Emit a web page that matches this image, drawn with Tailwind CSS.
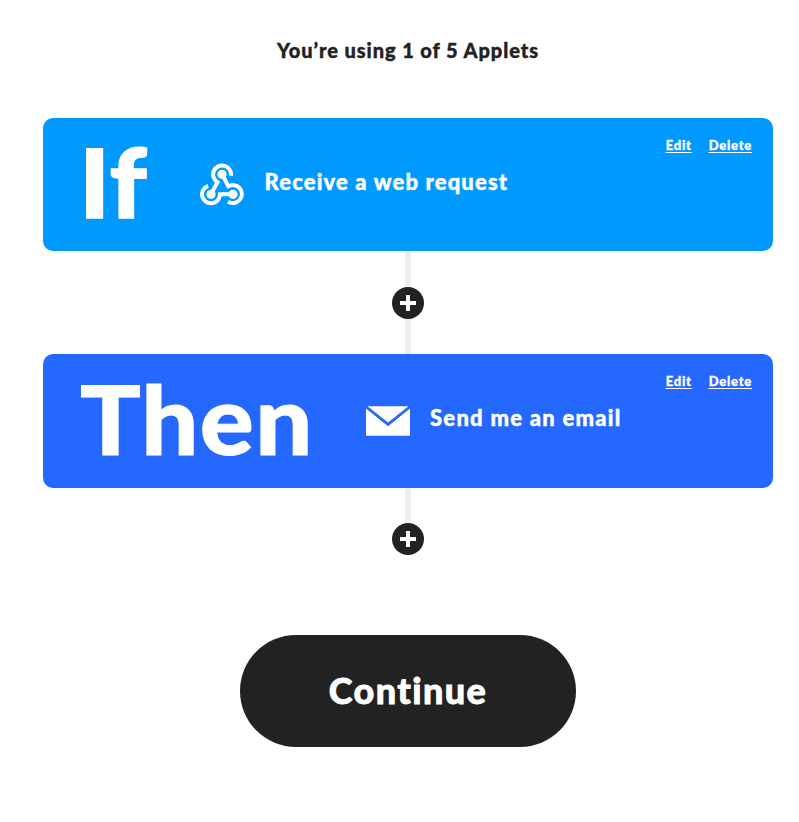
<!DOCTYPE html>
<html lang="en">
<head>
<meta charset="utf-8">
<title>Create Applet</title>
<script src="https://cdn.jsdelivr.net/npm/@tailwindcss/browser@4"></script>
</head>
<body class="bg-white font-['Lato',sans-serif] font-black text-[#222222] [font-variant-ligatures:none]">
<main class="ml-[43px] flex h-[822px] w-[730px] flex-col items-center overflow-hidden">
  <h1 class="mt-[35px] h-[83px] whitespace-nowrap text-[20px] leading-[30px] tracking-[0.93px] [-webkit-text-stroke:0.4px]">You’re using 1 of 5 Applets</h1>

  <section class="flex h-[133px] w-full shrink-0 rounded-[10px] bg-[#0099ff] text-white">
    <div class="ml-[36px] w-[121px] whitespace-nowrap pt-[3px] text-[96px] leading-[120px]"><span class="inline-block origin-left scale-x-[1.07] tracking-[1px] [-webkit-text-stroke:1.5px]">If</span></div>
    <svg class="mt-[45px] h-[44px] w-[44px] shrink-0" viewBox="0 0 44 44" fill="none" stroke="currentColor" stroke-width="4">
      <path d="M11 31L17.5 19.2A9 9 0 1 1 31 12.8"/>
      <path d="M22 11L28.3 23.3A9 9 0 1 1 28 38.6"/>
      <path d="M33 31.3H20A9 9 0 1 1 8.2 22.8"/>
      <g fill="currentColor" stroke="none"><circle cx="22" cy="11.3" r="4.6"/><circle cx="11" cy="31.3" r="4.6"/><circle cx="33" cy="31.3" r="4.6"/></g>
    </svg>
    <p class="ml-[20.5px] mt-[48px] whitespace-nowrap text-[22px] leading-[32px] tracking-[1.15px] [-webkit-text-stroke:0.4px]">Receive a web request</p>
    <nav class="ml-auto mr-[21px] mt-[17px] flex h-5 gap-[17px] text-[13px] leading-5 tracking-[0.75px] underline underline-offset-2 [-webkit-text-stroke:0.3px]"><a>Edit</a><a>Delete</a></nav>
  </section>

  <div class="flex h-[103px] shrink-0 flex-col items-center">
    <div class="h-[36px] w-[6px] bg-[#eeeeee]"></div>
    <svg class="size-8" viewBox="0 0 32 32"><circle cx="16" cy="16" r="16" fill="#222"/><path d="M8 16h16M16 8v16" stroke="#fff" stroke-width="4"/></svg>
    <div class="w-[6px] flex-1 bg-[#eeeeee]"></div>
  </div>

  <section class="flex h-[134px] w-full shrink-0 rounded-[10px] bg-[#2468ff] text-white">
    <div class="ml-[36.5px] w-[286.5px] whitespace-nowrap pt-[4px] text-[96px] leading-[120px]"><span class="inline-block origin-left scale-x-[1.05] tracking-[1.3px] [-webkit-text-stroke:1px]">Then</span></div>
    <svg class="mt-[52px] h-[30px] w-[44px] shrink-0" viewBox="0 0 44 30" fill="currentColor"><path d="M1.5 0.3h41L22 16.6Z"/><path d="M0 2.5L22 20.3 44 2.5V29.7H0Z"/></svg>
    <p class="ml-[20px] mt-[48px] whitespace-nowrap text-[22px] leading-[32px] tracking-[1.25px] [-webkit-text-stroke:0.4px]">Send me an email</p>
    <nav class="ml-auto mr-[21px] mt-[17px] flex h-5 gap-[17px] text-[13px] leading-5 tracking-[0.75px] underline underline-offset-2 [-webkit-text-stroke:0.3px]"><a>Edit</a><a>Delete</a></nav>
  </section>

  <div class="flex h-[67px] shrink-0 flex-col items-center">
    <div class="h-[35px] w-[6px] bg-[#eeeeee]"></div>
    <svg class="size-8" viewBox="0 0 32 32"><circle cx="16" cy="16" r="16" fill="#222"/><path d="M8 16h16M16 8v16" stroke="#fff" stroke-width="4"/></svg>
  </div>

  <button class="mt-[80px] h-[112px] w-[336px] shrink-0 rounded-full bg-[#222222] pb-[2px] text-[36px] leading-[48px] tracking-[1.4px] text-white [-webkit-text-stroke:0.8px]">Continue</button>
</main>
</body>
</html>
